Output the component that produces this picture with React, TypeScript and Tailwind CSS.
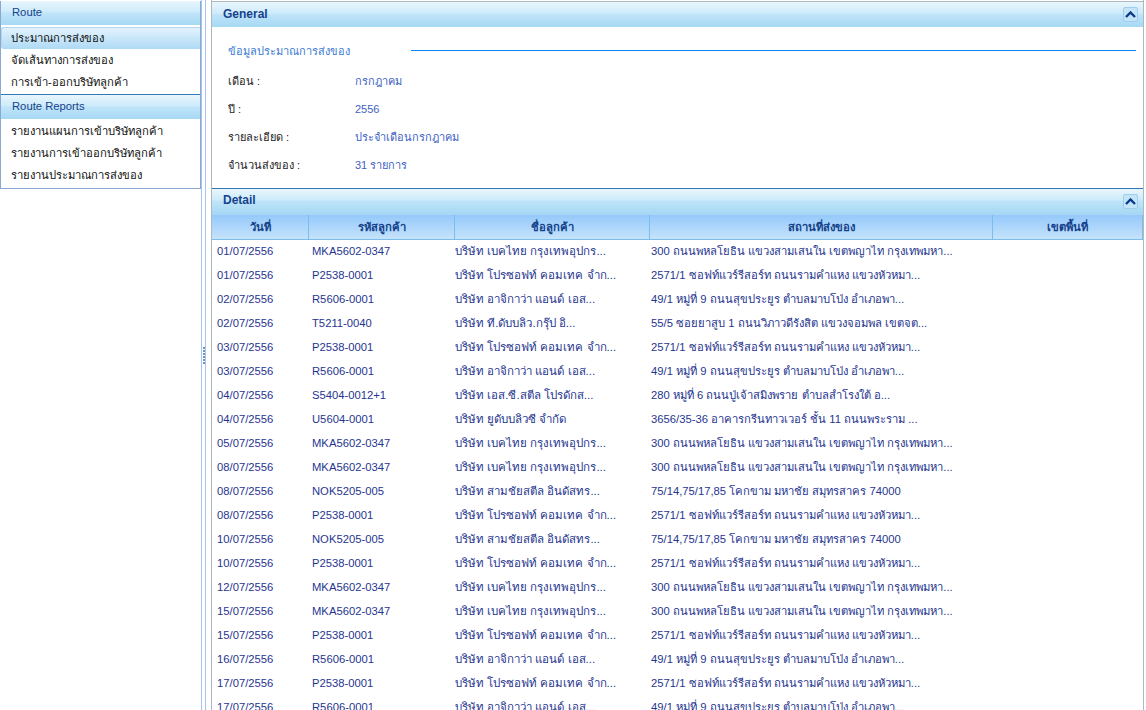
const menuA = ["ประมาณการส่งของ", "จัดเส้นทางการส่งของ", "การเข้า-ออกบริษัทลูกค้า"]
const menuB = ["รายงานแผนการเข้าบริษัทลูกค้า", "รายงานการเข้าออกบริษัทลูกค้า", "รายงานประมาณการส่งของ"]

const info = [
  ["เดือน :", "กรกฎาคม"],
  ["ปี :", "2556"],
  ["รายละเอียด :", "ประจำเดือนกรกฎาคม"],
  ["จำนวนส่งของ :", "31 รายการ"],
]

const bed = ["MKA5602-0347", "บริษัท เบคไทย กรุงเทพอุปกร...", "300 ถนนพหลโยธิน แขวงสามเสนใน เขตพญาไท กรุงเทพมหา..."]
const pro = ["P2538-0001", "บริษัท โปรซอฟท์ คอมเทค จำก...", "2571/1 ซอฟท์แวร์รีสอร์ท ถนนรามคำแหง แขวงหัวหมา..."]
const aji = ["R5606-0001", "บริษัท อาจิกาว่า แอนด์ เอส...", "49/1 หมู่ที่ 9 ถนนสุขประยูร ตำบลมาบโป่ง อำเภอพา..."]
const nok = ["NOK5205-005", "บริษัท สามชัยสตีล อินดัสทร...", "75/14,75/17,85 โคกขาม มหาชัย สมุทรสาคร 74000"]

const rows = [
  ["01/07/2556", ...bed],
  ["01/07/2556", ...pro],
  ["02/07/2556", ...aji],
  ["02/07/2556", "T5211-0040", "บริษัท ที.ดับบลิว.กรุ๊ป อิ...", "55/5 ซอยยาสูบ 1 ถนนวิภาวดีรังสิต แขวงจอมพล เขตจต..."],
  ["03/07/2556", ...pro],
  ["03/07/2556", ...aji],
  ["04/07/2556", "S5404-0012+1", "บริษัท เอส.ซี.สตีล โปรดักส...", "280 หมู่ที่ 6 ถนนปู่เจ้าสมิงพราย ตำบลสำโรงใต้ อ..."],
  ["04/07/2556", "U5604-0001", "บริษัท ยูดับบลิวซี จำกัด", "3656/35-36 อาคารกรีนทาวเวอร์ ชั้น 11 ถนนพระราม ..."],
  ["05/07/2556", ...bed],
  ["08/07/2556", ...bed],
  ["08/07/2556", ...nok],
  ["08/07/2556", ...pro],
  ["10/07/2556", ...nok],
  ["10/07/2556", ...pro],
  ["12/07/2556", ...bed],
  ["15/07/2556", ...bed],
  ["15/07/2556", ...pro],
  ["16/07/2556", ...aji],
  ["17/07/2556", ...pro],
  ["17/07/2556", ...aji],
]

const columns = [
  { label: "วันที่", width: "w-[97px]" },
  { label: "รหัสลูกค้า", width: "w-[146px]" },
  { label: "ชื่อลูกค้า", width: "w-[195px]" },
  { label: "สถานที่ส่งของ", width: "w-[343px]" },
  { label: "เขตพื้นที่", width: "flex-1" },
]

const headBg = "bg-[linear-gradient(#e9f6fd_0%,#cdebfb_46%,#c0e4f9_50%,#a6d9f4_100%)]"

function Collapse() {
  return (
    <button className="flex h-[15px] w-[15px] items-center justify-center rounded-[2px] border border-[#9fcdec] bg-[#c4e4f8]">
      <svg width="11" height="7" viewBox="0 0 11 7">
        <path d="M1 6 L5.5 1.5 L10 6" fill="none" stroke="#0a3a8c" strokeWidth="2.4" />
      </svg>
    </button>
  )
}

function PanelHead({ title, height }: { title: string; height: string }) {
  return (
    <div className={`flex ${height} items-center justify-between ${headBg} pl-[11px] pr-[5px]`}>
      <span className="mb-[2px] text-[12px] font-bold text-[#15428b]">{title}</span>
      <Collapse />
    </div>
  )
}

function MenuHead({ title }: { title: string }) {
  return (
    <div className={`flex h-[24px] items-center ${headBg} pb-[2px] pl-[11px] text-[#15428b]`}>
      {title}
    </div>
  )
}

export default function App() {
  return (
    <div className="flex h-[710px] w-[1146px] overflow-hidden bg-white text-[11.25px] font-['Liberation_Sans',sans-serif]">
      <aside className="mt-px w-[201px] shrink-0 self-start border-x border-b border-[#8aa8d0] border-t-0 bg-white">
        <MenuHead title="Route" />
        <div className="flex flex-col pb-px pt-[2px] text-[#111]">
          {menuA.map((item, i) => (
            <div
              key={item}
              className={
                i === 0
                  ? "flex h-[22px] items-center rounded-l-[3px] border-l border-t border-[#b4d6ee] bg-[linear-gradient(#e3f3fd,#aedaf5)] pl-[9px]"
                  : "flex h-[22px] items-center pl-[10px]"
              }
            >
              {item}
            </div>
          ))}
        </div>
        <div className="border-t border-[#2f78b5]">
          <MenuHead title="Route Reports" />
        </div>
        <div className="flex flex-col pb-[2px] pt-px text-[#111]">
          {menuB.map((item) => (
            <div key={item} className="flex h-[22px] items-center pl-[10px]">
              {item}
            </div>
          ))}
        </div>
      </aside>

      <div className="w-[10px] shrink-0">
        <div className="flex h-full w-[5px] flex-col items-center justify-center gap-px border-x border-[#a9c4ea]">
          {[0, 1, 2, 3, 4, 5].map((n) => (
            <span key={n} className="h-[2px] w-[2px] bg-[#6f94c8]" />
          ))}
        </div>
      </div>

      <main className="flex h-full w-[933px] shrink-0 flex-col border-x border-[#b0b8c0] pt-px">
        <section className="h-[187px] shrink-0 border-t border-[#b0b8c0] text-[11px]">
          <PanelHead title="General" height="h-[25px]" />
          <div className="mt-[16px] flex h-[17px] items-center pl-[16px] pr-[7px] text-[#3a7bd5]">
            <span className="w-[183px] shrink-0">ข้อมูลประมาณการส่งของ</span>
            <div className="mb-[2px] h-px flex-1 bg-[#0a84ff]" />
          </div>
          <div className="mt-[7px] flex flex-col">
            {info.map(([k, v]) => (
              <div key={k} className="flex h-[28px] items-center pl-[16px]">
                <span className="w-[127px] text-[#222]">{k}</span>
                <span className="text-[#3d5fc4]">{v}</span>
              </div>
            ))}
          </div>
        </section>
        <section className="min-h-0 flex-1 overflow-hidden border-t border-[#2f78b5]">
          <PanelHead title="Detail" height="h-[24px]" />
          <div className="flex h-[27px] border-t-2 border-b border-[#a9d6f5] border-b-[#7dbdec] bg-[linear-gradient(#94c9fb,#c6e3fb)] font-bold text-[#15428b]">
            {columns.map((c) => (
              <div key={c.label} className={`${c.width} flex items-center justify-center border-r border-[#7dbdec]`}>
                {c.label}
              </div>
            ))}
          </div>
          <div className="-mt-px flex flex-col text-[#1f3590]">
            {rows.map((r, i) => (
              <div key={i} className="flex h-[24px] shrink-0 items-baseline whitespace-nowrap leading-[24px]">
                <div className="w-[97px] pl-[5px]">{r[0]}</div>
                <div className="w-[146px] pl-[3px]">{r[1]}</div>
                <div className="w-[195px] text-[11.5px]">{r[2]}</div>
                <div className="w-[343px] pl-[1px]">{r[3]}</div>
              </div>
            ))}
          </div>
        </section>
      </main>
    </div>
  )
}
